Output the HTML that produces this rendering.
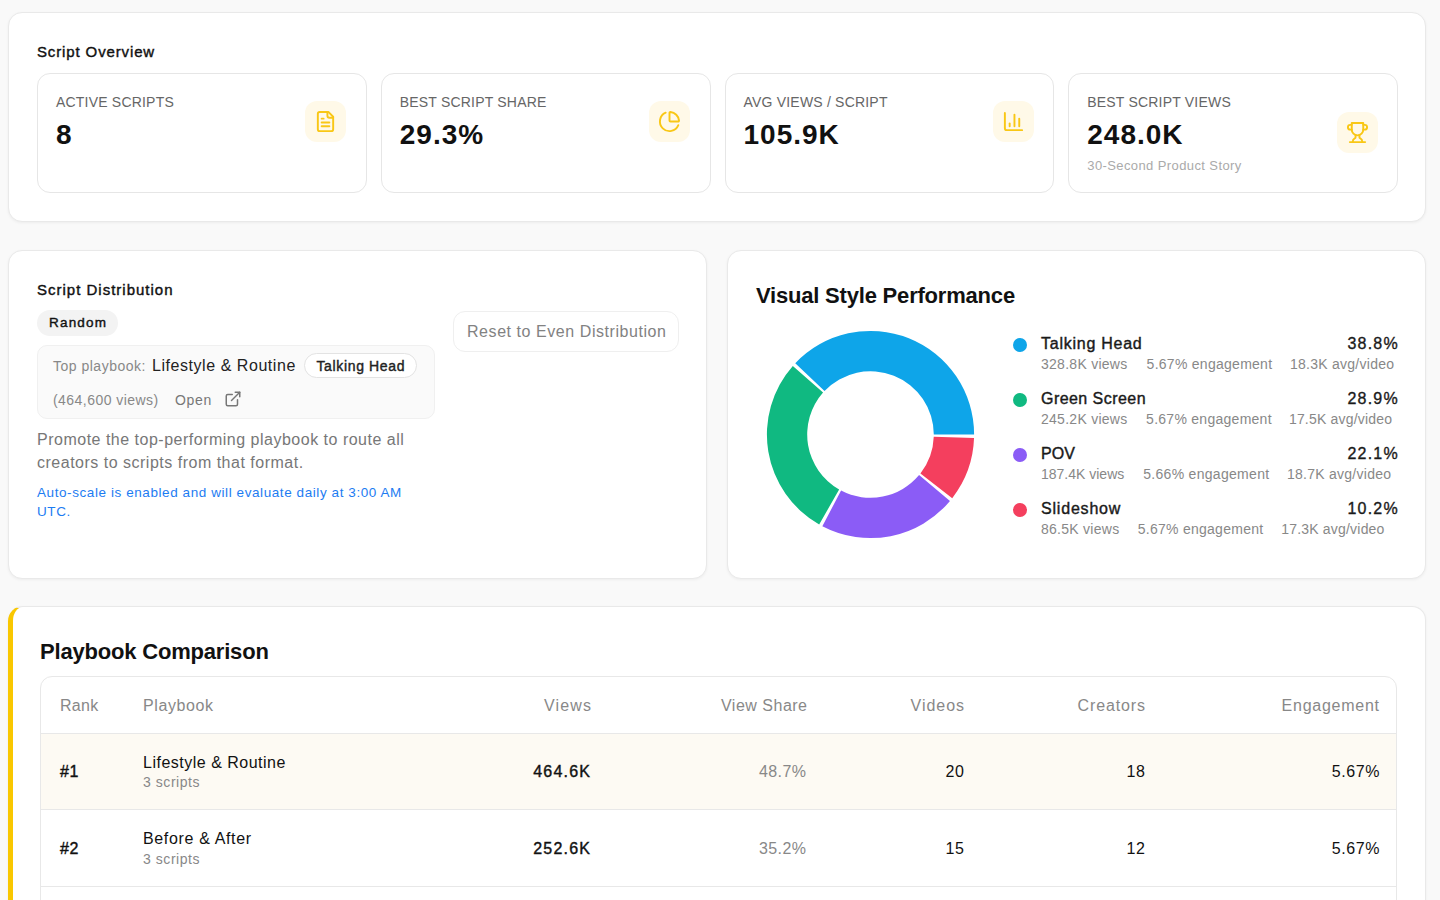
<!DOCTYPE html>
<html><head><meta charset="utf-8">
<style>
*{box-sizing:border-box;margin:0;padding:0}
html,body{width:1440px;height:900px;overflow:hidden;background:#f9f9f9;font-family:"Liberation Sans",sans-serif;color:#111}
.card{position:absolute;background:#fff;border:1px solid #e9e9e9;border-radius:14px;box-shadow:0 1px 3px rgba(0,0,0,0.05)}
#c1{left:8px;top:12px;width:1418px;height:210px}
#c2{left:8px;top:250px;width:699px;height:328.5px}
#c3{left:727px;top:250px;width:699px;height:328.5px}
#c4{left:8px;top:606px;width:1418px;height:400px;border-left:5px solid #f9c700;border-radius:15px 14px 14px 15px}
.h15{position:absolute;font-size:15px;font-weight:normal;-webkit-text-stroke-width:0.4px;letter-spacing:0.3px}
.stat{position:absolute;top:60px;width:329.75px;height:120px;border:1px solid #e6e6e6;border-radius:13px;background:#fff}
.stat .lbl{position:absolute;left:18px;top:20px;font-size:14px;color:#666;letter-spacing:0.2px}
.stat .val{position:absolute;left:18px;top:45px;font-size:28px;font-weight:bold;letter-spacing:1px}
.stat .sub{position:absolute;left:18px;top:84px;font-size:13px;color:#aaa;letter-spacing:0.4px}
.ico{position:absolute;width:41px;height:41px;border-radius:12px;background:#fff9e8}
.ico svg{position:absolute;left:9px;top:9px;width:23px;height:23px}

.h22{position:absolute;font-size:22px;font-weight:bold;letter-spacing:-0.5px;white-space:nowrap}
.pill{position:absolute;background:#f3f3f3;border-radius:13px;font-size:13.5px;font-weight:normal;-webkit-text-stroke-width:0.4px;line-height:26px;text-align:center;color:#111;letter-spacing:1.2px;text-indent:1.2px}
.tpb{position:absolute;left:28px;top:94px;width:398px;height:74px;background:#fafafa;border:1px solid #f0f0f0;border-radius:10px}
.tpb span{position:absolute;white-space:nowrap}
.tp1{left:15px;top:11.5px;font-size:14px;color:#888;letter-spacing:0.5px}
.tp2{left:114px;top:11px;font-size:16px;color:#222;letter-spacing:0.55px}
.pill2{left:266px;top:6.5px;width:113px;height:25px;border:1px solid #e3e3e3;background:#fff;border-radius:13px;font-size:14px;font-weight:normal;-webkit-text-stroke-width:0.4px;line-height:25.5px;text-align:center;color:#222;letter-spacing:0.65px;text-indent:0.65px}
.tp3{left:15px;top:46px;font-size:14px;color:#888;letter-spacing:0.45px}
.tp4{left:137px;top:46px;font-size:14px;color:#777;letter-spacing:0.7px}
.ext{position:absolute;left:185.7px;top:43.7px;width:18px;height:18px}
.para{position:absolute;left:28px;top:177px;width:420px;font-size:16px;line-height:23px;color:#777;letter-spacing:0.5px}
.blue{position:absolute;left:28px;top:233px;width:420px;font-size:13.5px;line-height:18.5px;color:#1d7cf2;letter-spacing:0.58px}
.reset{position:absolute;left:444px;top:60px;width:226px;height:41px;border:1px solid #efefef;border-radius:12px;font-size:16px;line-height:39px;padding-left:13px;color:#828282;letter-spacing:0.56px;white-space:nowrap}
.leg{position:absolute;left:285px;width:385px;height:50px}
.leg i{position:absolute;left:0;top:3px;width:14px;height:14px;border-radius:7px}
.leg b{position:absolute;left:28px;top:0;font-size:16px;font-weight:normal;-webkit-text-stroke-width:0.4px;white-space:nowrap;letter-spacing:0.75px;color:#1a1a1a}
.leg em{position:absolute;right:-1px;top:0;font-size:16px;font-weight:normal;-webkit-text-stroke-width:0.35px;font-style:normal;letter-spacing:1.25px;color:#1a1a1a}
.leg p{position:absolute;left:28px;top:21px;font-size:14px;color:#888;white-space:nowrap;letter-spacing:0.27px}
.leg p span{position:absolute;top:0}
.tbl{position:absolute;left:27px;top:69px;width:1357px;height:400px;border:1px solid #e8e8e8;border-radius:12px;overflow:hidden}
.tr{position:relative;height:76.5px;border-top:1px solid #e8e8e8}
.tr.th{height:55.5px;border-top:none}
.tr.hl{background:#fdfaf3}
.tr>span{position:absolute;white-space:nowrap;font-size:16px}
.th>span{top:19.5px;color:#888;letter-spacing:0.3px;margin-right:-1.3px}
.tr>.c0{left:19px}.tr>.c1{left:102px}
.tr>.c2{right:806px}.tr>.c3{right:590px}.tr>.c4{right:433px}.tr>.c5{right:252px}.tr>.c6{right:18px}
.tr:not(.th)>span{top:29.5px;letter-spacing:0.6px;margin-right:-0.6px}
.tr:not(.th)>.c1{top:20.4px}
.rk{-webkit-text-stroke-width:0.4px}
.tr:not(.th)>.c4{right:432px}.tr:not(.th)>.c5{right:251px}.tr:not(.th)>.c6{right:16.5px}
.nm{display:block;font-size:16px;letter-spacing:0.5px}
.sc{display:block;font-size:14px;color:#888;margin-top:2.3px;letter-spacing:0.55px}
.bv{-webkit-text-stroke-width:0.4px;letter-spacing:1.2px!important;margin-right:-1.2px!important}
.gy{color:#888;letter-spacing:0.4px!important;margin-right:-0.4px!important}
</style></head><body>

<div class="card" id="c1">
  <div class="h15" style="left:28px;top:30px;letter-spacing:0.87px">Script Overview</div>
  <div class="stat" style="left:28px">
    <div class="lbl">ACTIVE SCRIPTS</div>
    <div class="val">8</div>
    <div class="ico" style="right:19.5px;top:27px"><svg viewBox="0 0 24 24" fill="none" stroke="#f9c715" stroke-width="2" stroke-linecap="round" stroke-linejoin="round"><path d="M15 2H6a2 2 0 0 0-2 2v16a2 2 0 0 0 2 2h12a2 2 0 0 0 2-2V7Z"/><path d="M14 2v4a2 2 0 0 0 2 2h4"/><path d="M10 9H8"/><path d="M16 13H8"/><path d="M16 17H8"/></svg></div>
  </div>
  <div class="stat" style="left:371.75px">
    <div class="lbl">BEST SCRIPT SHARE</div>
    <div class="val">29.3%</div>
    <div class="ico" style="right:19.5px;top:27px"><svg viewBox="0 0 24 24" fill="none" stroke="#f9c715" stroke-width="2" stroke-linecap="round" stroke-linejoin="round"><path d="M21 12c.552 0 1.005-.449.95-.998a10 10 0 0 0-8.953-8.951c-.55-.055-.998.398-.998.95v8a1 1 0 0 0 1 1z"/><path d="M21.21 15.89A10 10 0 1 1 8 2.83"/></svg></div>
  </div>
  <div class="stat" style="left:715.5px">
    <div class="lbl">AVG VIEWS / SCRIPT</div>
    <div class="val">105.9K</div>
    <div class="ico" style="right:19.5px;top:27px"><svg viewBox="0 0 24 24" fill="none" stroke="#f9c715" stroke-width="2" stroke-linecap="round" stroke-linejoin="round"><path d="M3 3v16a2 2 0 0 0 2 2h16"/><path d="M18 17V9"/><path d="M13 17V5"/><path d="M8 17v-3"/></svg></div>
  </div>
  <div class="stat" style="left:1059.25px">
    <div class="lbl">BEST SCRIPT VIEWS</div>
    <div class="val">248.0K</div>
    <div class="sub">30-Second Product Story</div>
    <div class="ico" style="right:19.5px;top:38px"><svg viewBox="0 0 24 24" fill="none" stroke="#f9c715" stroke-width="2" stroke-linecap="round" stroke-linejoin="round"><path d="M6 9H4.5a2.5 2.5 0 0 1 0-5H6"/><path d="M18 9h1.5a2.5 2.5 0 0 0 0-5H18"/><path d="M4 22h16"/><path d="M10 14.66V17c0 .55-.47.98-.97 1.21C7.85 18.75 7 20.24 7 22"/><path d="M14 14.66V17c0 .55.47.98.97 1.21C16.15 18.75 17 20.24 17 22"/><path d="M18 2H6v7a6 6 0 0 0 12 0V2Z"/></svg></div>
  </div>
</div>

<div class="card" id="c2">
  <div class="h15" style="left:28px;top:30px;letter-spacing:1px">Script Distribution</div>
  <div class="pill" style="left:28px;top:59px;width:81px;height:26px">Random</div>
  <div class="tpb">
    <span class="tp1">Top playbook:</span>
    <span class="tp2">Lifestyle &amp; Routine</span>
    <span class="pill2">Talking Head</span>
    <span class="tp3">(464,600 views)</span>
    <span class="tp4">Open</span>
    <svg class="ext" viewBox="0 0 24 24" fill="none" stroke="#777" stroke-width="2" stroke-linecap="round" stroke-linejoin="round"><path d="M15 3h6v6"/><path d="M10 14 21 3"/><path d="M18 13v6a2 2 0 0 1-2 2H5a2 2 0 0 1-2-2V8a2 2 0 0 1 2-2h6"/></svg>
  </div>
  <div class="para">Promote the top-performing playbook to route all<br>creators to scripts from that format.</div>
  <div class="blue">Auto-scale is enabled and will evaluate daily at 3:00 AM<br>UTC.</div>
  <div class="reset">Reset to Even Distribution</div>
</div>
<div class="card" id="c3">
  <div class="h22" style="left:28px;top:32px;letter-spacing:-0.2px">Visual Style Performance</div>
  <div class="leg" style="top:84px"><i style="background:#0ea5e9"></i><b style="letter-spacing:0.75px">Talking Head</b><em>38.8%</em><p><span style="left:0px;letter-spacing:0.27px">328.8K views</span><span style="left:105.6px;letter-spacing:0.27px">5.67% engagement</span><span style="left:248.9px;letter-spacing:0.27px">18.3K avg/video</span></p></div>
  <div class="leg" style="top:139px"><i style="background:#10b981"></i><b style="letter-spacing:0.45px">Green Screen</b><em>28.9%</em><p><span style="left:0px;letter-spacing:0.27px">245.2K views</span><span style="left:105.1px;letter-spacing:0.27px">5.67% engagement</span><span style="left:247.9px;letter-spacing:0.2px">17.5K avg/video</span></p></div>
  <div class="leg" style="top:194px"><i style="background:#8b5cf6"></i><b style="letter-spacing:0.1px">POV</b><em>22.1%</em><p><span style="left:0px;letter-spacing:0.0px">187.4K views</span><span style="left:102.2px;letter-spacing:0.3px">5.66% engagement</span><span style="left:245.9px;letter-spacing:0.27px">18.7K avg/video</span></p></div>
  <div class="leg" style="top:249px"><i style="background:#f43f5e"></i><b style="letter-spacing:0.8px">Slideshow</b><em>10.2%</em><p><span style="left:0px;letter-spacing:0.27px">86.5K views</span><span style="left:96.7px;letter-spacing:0.27px">5.67% engagement</span><span style="left:240.2px;letter-spacing:0.2px">17.3K avg/video</span></p></div>
</div>
<svg style="position:absolute;left:0;top:0" width="1440" height="900" viewBox="0 0 1440 900">
<g>
<path d="M974.10 434.50A103.6 103.6 0 0 0 795.26 363.29L824.53 390.99A63.3 63.3 0 0 1 933.80 434.50Z" fill="#0ea5e9"/>
<path d="M792.82 365.96A103.6 103.6 0 0 0 819.18 524.49L839.14 489.49A63.3 63.3 0 0 1 823.04 392.62Z" fill="#10b981"/>
<path d="M822.35 526.23A103.6 103.6 0 0 0 949.97 500.96L919.06 475.11A63.3 63.3 0 0 1 841.08 490.55Z" fill="#8b5cf6"/>
<path d="M952.24 498.15A103.6 103.6 0 0 0 974.04 438.12L933.76 436.71A63.3 63.3 0 0 1 920.45 473.39Z" fill="#f43f5e"/>
</g></svg>
<div class="card" id="c4">
  <div class="h22" style="left:27px;top:31.5px;letter-spacing:-0.19px">Playbook Comparison</div>
  <div class="tbl">
    <div class="tr th"><span class="c0" style="letter-spacing:0.3px">Rank</span><span class="c1" style="letter-spacing:0.6px">Playbook</span><span class="c2" style="letter-spacing:1.15px;margin-right:-2.15px">Views</span><span class="c3" style="letter-spacing:0.5px;margin-right:-1.50px">View Share</span><span class="c4" style="letter-spacing:0.95px;margin-right:-1.95px">Videos</span><span class="c5" style="letter-spacing:0.87px;margin-right:-1.87px">Creators</span><span class="c6" style="letter-spacing:0.74px;margin-right:-1.74px">Engagement</span></div>
    <div class="tr hl"><span class="c0 rk">#1</span><span class="c1"><span class="nm">Lifestyle &amp; Routine</span><span class="sc">3 scripts</span></span><span class="c2 bv">464.6K</span><span class="c3 gy">48.7%</span><span class="c4">20</span><span class="c5">18</span><span class="c6">5.67%</span></div>
    <div class="tr"><span class="c0 rk">#2</span><span class="c1"><span class="nm" style="letter-spacing:0.65px">Before &amp; After</span><span class="sc">3 scripts</span></span><span class="c2 bv">252.6K</span><span class="c3 gy">35.2%</span><span class="c4">15</span><span class="c5">12</span><span class="c6">5.67%</span></div>
    <div class="tr"></div>
  </div>
</div>

</body></html>
